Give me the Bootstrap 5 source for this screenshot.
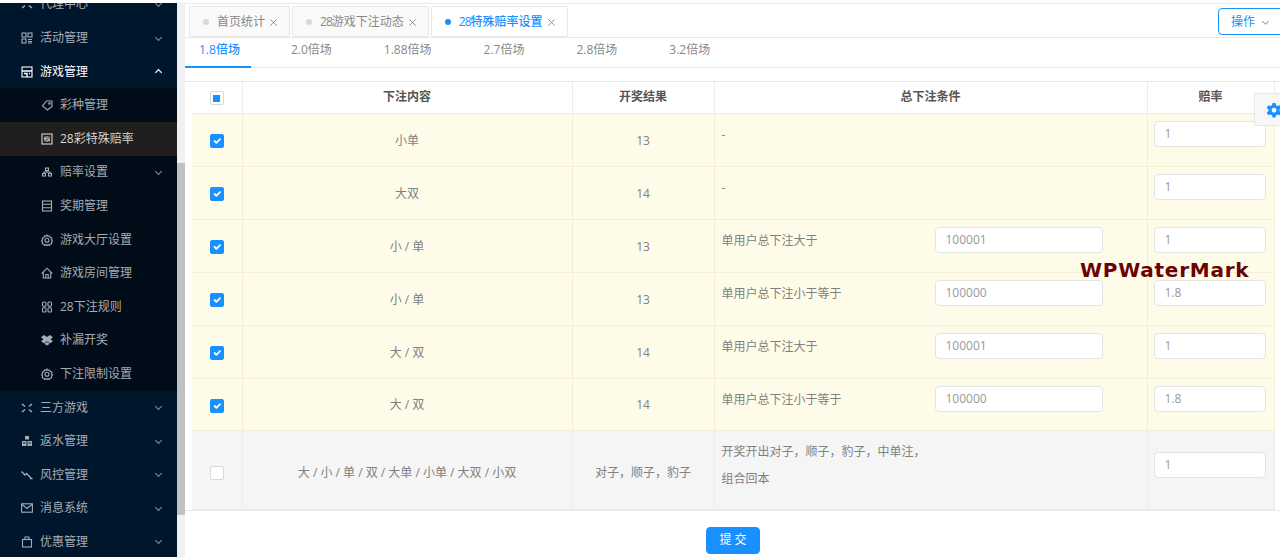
<!DOCTYPE html>
<html lang="zh-CN">
<head>
    <meta charset="UTF-8">
    <meta name="viewport" content="width=device-width, initial-scale=1.0">
    <title>28特殊赔率设置</title>
    <link href="https://cdn.jsdelivr.net/npm/bootstrap@5.3.0/dist/css/bootstrap.min.css" rel="stylesheet">
    <style>
        html, body {
            height: 557px;
            overflow: hidden;
        }
        body {
            font-family: "Open Sans", "Noto Sans CJK SC", sans-serif;
            font-size: 12px;
            color: #777;
            background: #fff;
        }
        .shell {
            height: 557px;
            position: relative;
        }
        /* sidebar */
        .side {
            width: 177px;
            margin-top: 3px;
            background: #00162c;
            overflow: hidden;
            flex: none;
        }
        .side-list {
            margin-top: -15.4px;
        }
        .side-item {
            height: 33.6px;
            padding-left: 21px;
            padding-right: 14px;
            color: #a5adb5;
            gap: 7px;
        }
        .side-sub {
            background: #000c17;
        }
        .side-sub .side-item {
            padding-left: 41px;
        }
        .side-item.is-open {
            color: #fff;
        }
        .side-item.is-current {
            background: #211f1d;
            color: #d5d5d5;
        }
        .ico {
            width: 12px;
            height: 12px;
            flex: none;
            fill: none;
            stroke: currentColor;
            stroke-width: 1.1;
        }
        .chev {
            width: 9px;
            height: 9px;
            margin-left: auto;
            fill: none;
            stroke: #7d8791;
            stroke-width: 1.3;
        }
        .is-open .chev {
            stroke: #fff;
        }
        .scroll-track {
            width: 8px;
            flex: none;
            margin-top: 3px;
            background: #f1f1f1;
        }
        .scroll-thumb {
            height: 352px;
            margin-top: 160px;
            background: #c1c1c1;
        }
        /* main */
        .main {
            min-width: 0;
            overflow: hidden;
        }
        .head-bar {
            height: 35px;
            margin-top: 3px;
            border-top: 1px solid #e8e8e8;
            border-bottom: 1px solid #e8e8e8;
            padding-left: 4px;
            gap: 2px;
        }
        .page-tab {
            height: 31px;
            padding: 2px 11px 0 13px;
            margin-top: 1px;
            background: #fafafa;
            border: 1px solid #e8e8e8;
            border-radius: 2px;
            color: #888;
            white-space: nowrap;
        }
        .page-tab.is-active {
            background: #fff;
            color: #1890ff;
            font-weight: 500;
        }
        .tab-dot {
            width: 6px;
            height: 6px;
            border-radius: 50%;
            background: #d9d9d9;
            margin-right: 8px;
        }
        .is-active .tab-dot {
            background: #1890ff;
        }
        .tab-x {
            width: 9px;
            height: 9px;
            margin-left: 4px;
            stroke: #888;
            stroke-width: 1;
            fill: none;
        }
        .num-tight {
            letter-spacing: -1px;
        }
        .action-btn {
            height: 27px;
            width: 72px;
            margin-right: -10px;
            margin-top: 1px;
            border: 1px solid #1890ff;
            border-radius: 4px;
            color: #1890ff;
            font-size: 12px;
            padding: 2px 0 0 12px;
            background: #fff;
            gap: 6px;
        }
        .action-btn:hover {
            color: #1890ff;
            background: #fff;
            border-color: #1890ff;
        }
        .action-btn svg {
            width: 9px;
            height: 9px;
            fill: none;
            stroke: #1890ff;
            stroke-width: 1.1;
        }
        .rate-tabs {
            height: 30px;
            border-bottom: 1px solid #e8e8e8;
            flex-wrap: nowrap;
        }
        .rate-tab {
            height: 30px;
            padding: 0 12px 4px 14px;
            margin-right: 26px;
            color: #888;
            border-bottom: 2px solid transparent;
            white-space: nowrap;
        }
        .rate-tab.is-active {
            color: #1890ff;
            border-bottom-color: #1890ff;
            font-weight: 500;
            padding-right: 11px;
        }
        .table-wrap {
            margin-top: 13px;
            padding: 0 6px 0 7px;
            border-top: 1px solid #e8e8e8;
            border-bottom: 1px solid #e8e8e8;
        }
        .rate-table {
            table-layout: fixed;
            width: 1082px;
            margin: 0;
            font-size: 12px;
            --bs-table-color: #808080;
            border-color: #ececec;
        }
        .rate-table.table > thead > tr > th {
            height: 31px;
            padding: 0;
            color: #555;
            font-weight: 600;
            text-align: center;
            vertical-align: middle;
            border-width: 0 1px 1px 0;
        }
        .rate-table.table > tbody > tr > td {
            height: 53px;
            padding: 8px 7px 6px;
            vertical-align: middle;
            text-align: center;
            border-width: 0 1px 1px 0;
        }
        .rate-table.table > tbody > tr.row-short > td {
            height: 52px;
        }
        .rate-table.table > tbody > tr > td.cell-top {
            padding-top: 7px;
            vertical-align: top;
            text-align: left;
        }
        .rate-table.table > tbody > tr > td.cell-rate {
            padding-left: 6px;
        }
        .row-warn {
            --bs-table-bg: #fefce8;
            border-color: #f3f0d6;
        }
        .row-plain {
            --bs-table-bg: #f5f5f5;
        }
        .rate-table.table > tbody > tr.row-plain > td {
            height: 79px;
            padding-top: 10px;
            padding-bottom: 4px;
        }
        .rate-table.table > tbody > tr.row-plain > td.cond-tall {
            padding-top: 7px;
        }
        .rate-table.table > tbody > tr.row-plain > td.cell-rate {
            padding-top: 21px;
            vertical-align: top;
        }
        .cond-line {
            height: 26px;
            line-height: 28px;
        }
        .cond-label {
            width: 213px;
            flex: none;
        }
        .cond-tall {
            line-height: 27px;
        }
        .num-input {
            height: 26px;
            padding: 0 10px;
            font-size: 12px;
            color: #999;
            border-color: #e4e4e4;
            border-radius: 4px;
        }
        .num-input.is-wide {
            width: 168px;
        }
        .num-input.is-rate {
            width: 112px;
        }
        .rate-table .form-check-input {
            width: 14px;
            height: 14px;
            margin: 0;
            border-radius: 2px;
            border-color: #d9d9d9;
            vertical-align: middle;
        }
        .rate-table .form-check-input:checked {
            background-color: #1890ff;
            border-color: #1890ff;
        }
        .half-check {
            display: inline-flex;
            align-items: center;
            justify-content: center;
            width: 14px;
            height: 14px;
            border: 1px solid #d9d9d9;
            border-radius: 2px;
            background: #fff;
            vertical-align: middle;
        }
        .half-check::after {
            content: "";
            width: 7px;
            height: 7px;
            background: #1890ff;
        }
        .submit-btn {
            width: 54px;
            height: 27px;
            padding: 0;
            font-size: 12px;
            background: #1890ff;
            border-color: #1890ff;
            border-radius: 4px;
        }
        .submit-row {
            margin-top: 16px;
            padding-left: 7px;
            padding-right: 6px;
        }
        /* overlays */
        .gear-tab {
            position: absolute;
            top: 93px;
            right: 0;
            width: 26px;
            height: 33px;
            background: #f7f7f7;
            border: 1px solid #e8e8e8;
            border-right: 0;
            overflow: hidden;
            padding: 9px 0 0 11px;
        }
        .gear-tab svg {
            width: 16px;
            height: 16px;
            fill: #1890ff;
            display: block;
        }
        .water-mark {
            position: absolute;
            left: 1080px;
            top: 256px;
            font-family: "DejaVu Sans", sans-serif;
            font-weight: 700;
            font-size: 20px;
            line-height: 28px;
            letter-spacing: 0.75px;
            color: #6b0202;
            white-space: nowrap;
        }
    </style>
</head>
<body>
    <svg width="0" height="0" class="position-absolute">
        <symbol id="i-grid" viewBox="0 0 12 12"><rect x="1" y="1" width="4" height="4"/><rect x="7" y="1" width="4" height="4"/><rect x="1" y="7" width="4" height="4"/><path d="M7 7.5h4M7 9.5h4M7 11h4"/></symbol>
        <symbol id="i-game" viewBox="0 0 12 12"><rect x="1" y="1" width="10" height="10"/><path d="M1 5h10M3 7.5h3v3.5M8 7.5h1" stroke-width="1.4"/></symbol>
        <symbol id="i-tag" viewBox="0 0 12 12"><path d="M5.5 2H11v5.5L6.5 11 1.5 7z"/><circle cx="8.5" cy="4.5" r=".7"/></symbol>
        <symbol id="i-chart" viewBox="0 0 12 12"><rect x="1" y="1" width="10" height="10"/><path d="M4 3.5v5M8 3.5v5M3 5.5h2M7 7h2M6 3v6"/></symbol>
        <symbol id="i-tree" viewBox="0 0 12 12"><rect x="4.5" y="2" width="3" height="2.5"/><rect x="1.5" y="7.5" width="3" height="2.5"/><rect x="7.5" y="7.5" width="3" height="2.5"/><path d="M6 4.5V6H3v1.5M6 6h3v1.5"/></symbol>
        <symbol id="i-list" viewBox="0 0 12 12"><rect x="1.5" y="1" width="9" height="10"/><path d="M1.5 4.3h9M1.5 7.7h9"/></symbol>
        <symbol id="i-gear" viewBox="0 0 12 12"><path d="M6 1l1 1.3 1.7-.3.6 1.6 1.6.6-.3 1.7L11.500 7l-1.100 1.100.3 1.600-1.600.6-.600 1.200L7 10.700 6 11.500 5 10.700 3.500 11.500l-.6-1.200-1.600-.6.300-1.600L.5 7l1.100-1.100-.300-1.700 1.600-.6.600-1.600L5 2.300z"/><circle cx="6" cy="6.300" r="2"/></symbol>
        <symbol id="i-home" viewBox="0 0 12 12"><path d="M.8 6.500 6 1.200l5.200 5.300M2.300 5.500V11h7.400V5.500M4.800 11V7.500h2.400V11"/></symbol>
        <symbol id="i-apps" viewBox="0 0 12 12"><rect x="1.500" y="1" width="3.500" height="4.300" rx="1"/><rect x="7" y="1" width="3.500" height="4.300" rx="1"/><rect x="1.500" y="6.700" width="3.500" height="4.300" rx="1"/><rect x="7" y="6.700" width="3.500" height="4.300" rx="1"/></symbol>
        <symbol id="i-box" viewBox="0 0 12 12"><path fill="currentColor" stroke="none" d="M3 1 6 3 9 1l3 2.200-2.500 2L12 7.300 9 9.200 6 7.300 3 9.200 0 7.300l2.500-2.100L0 3.200zM3.200 9.800 6 8l2.800 1.800L6 11.600z"/></symbol>
        <symbol id="i-expand" viewBox="0 0 12 12"><path d="M1 2l3 2.500M11 2 8 4.500M1 10l3-2.500M11 10 8 7.500" stroke-width="1.500"/></symbol>
        <symbol id="i-bank" viewBox="0 0 12 12"><path fill="currentColor" stroke="none" d="M4 1h4v3.500H4zM1 6h4.500v5H1zM6.500 6H11v5H6.500z"/><path d="M2 8h2.500M7.500 8H10" stroke="#00162c"/></symbol>
        <symbol id="i-fall" viewBox="0 0 12 12"><path d="M.5 2.500 4 6l1.500-1.500L10 9M11.500 9.500H9" stroke-width="1.300"/></symbol>
        <symbol id="i-mail" viewBox="0 0 12 12"><rect x=".6" y="1.800" width="10.800" height="8.400"/><path d="M.8 2.300 6 6.500l5.200-4.200"/></symbol>
        <symbol id="i-bag" viewBox="0 0 12 12"><rect x="1.500" y="3.500" width="9" height="7.500"/><path d="M4 3.500V1h4v2.500"/></symbol>
        <symbol id="i-down" viewBox="0 0 10 10"><path d="M1.500 3.500 5 7l3.500-3.500"/></symbol>
        <symbol id="i-up" viewBox="0 0 10 10"><path d="M1.500 6.500 5 3l3.500 3.500"/></symbol>
        <symbol id="i-x" viewBox="0 0 10 10"><path d="M1.500 1.500l7 7M8.500 1.500l-7 7"/></symbol>
    </svg>

    <div class="shell d-flex">
        <aside class="side">
            <div class="side-list">
                <div class="side-item d-flex align-items-center"><svg class="ico"><use href="#i-expand"/></svg>代理中心<svg class="chev"><use href="#i-down"/></svg></div>
                <div class="side-item d-flex align-items-center"><svg class="ico"><use href="#i-grid"/></svg>活动管理<svg class="chev"><use href="#i-down"/></svg></div>
                <div class="side-item is-open d-flex align-items-center"><svg class="ico"><use href="#i-game"/></svg>游戏管理<svg class="chev"><use href="#i-up"/></svg></div>
                <div class="side-sub">
                    <div class="side-item d-flex align-items-center"><svg class="ico"><use href="#i-tag"/></svg>彩种管理</div>
                    <div class="side-item is-current d-flex align-items-center"><svg class="ico"><use href="#i-chart"/></svg>28彩特殊赔率</div>
                    <div class="side-item d-flex align-items-center"><svg class="ico"><use href="#i-tree"/></svg>赔率设置<svg class="chev"><use href="#i-down"/></svg></div>
                    <div class="side-item d-flex align-items-center"><svg class="ico"><use href="#i-list"/></svg>奖期管理</div>
                    <div class="side-item d-flex align-items-center"><svg class="ico"><use href="#i-gear"/></svg>游戏大厅设置</div>
                    <div class="side-item d-flex align-items-center"><svg class="ico"><use href="#i-home"/></svg>游戏房间管理</div>
                    <div class="side-item d-flex align-items-center"><svg class="ico"><use href="#i-apps"/></svg>28下注规则</div>
                    <div class="side-item d-flex align-items-center"><svg class="ico"><use href="#i-box"/></svg>补漏开奖</div>
                    <div class="side-item d-flex align-items-center"><svg class="ico"><use href="#i-gear"/></svg>下注限制设置</div>
                </div>
                <div class="side-item d-flex align-items-center"><svg class="ico"><use href="#i-expand"/></svg>三方游戏<svg class="chev"><use href="#i-down"/></svg></div>
                <div class="side-item d-flex align-items-center"><svg class="ico"><use href="#i-bank"/></svg>返水管理<svg class="chev"><use href="#i-down"/></svg></div>
                <div class="side-item d-flex align-items-center"><svg class="ico"><use href="#i-fall"/></svg>风控管理<svg class="chev"><use href="#i-down"/></svg></div>
                <div class="side-item d-flex align-items-center"><svg class="ico"><use href="#i-mail"/></svg>消息系统<svg class="chev"><use href="#i-down"/></svg></div>
                <div class="side-item d-flex align-items-center"><svg class="ico"><use href="#i-bag"/></svg>优惠管理<svg class="chev"><use href="#i-down"/></svg></div>
            </div>
        </aside>
        <div class="scroll-track"><div class="scroll-thumb"></div></div>

        <main class="main flex-grow-1">
            <div class="head-bar d-flex align-items-center">
                <div class="page-tab d-flex align-items-center"><span class="tab-dot"></span>首页统计<svg class="tab-x"><use href="#i-x"/></svg></div>
                <div class="page-tab d-flex align-items-center"><span class="tab-dot"></span><span class="num-tight">28</span>游戏下注动态<svg class="tab-x"><use href="#i-x"/></svg></div>
                <div class="page-tab is-active d-flex align-items-center"><span class="tab-dot"></span><span class="num-tight">28</span>特殊赔率设置<svg class="tab-x"><use href="#i-x"/></svg></div>
                <button type="button" class="btn action-btn ms-auto d-flex align-items-center">操作<svg><use href="#i-down"/></svg></button>
            </div>

            <div class="rate-tabs d-flex">
                <div class="rate-tab is-active d-flex align-items-center">1.8倍场</div>
                <div class="rate-tab d-flex align-items-center">2.0倍场</div>
                <div class="rate-tab d-flex align-items-center">1.88倍场</div>
                <div class="rate-tab d-flex align-items-center">2.7倍场</div>
                <div class="rate-tab d-flex align-items-center">2.8倍场</div>
                <div class="rate-tab d-flex align-items-center">3.2倍场</div>
            </div>

            <div class="table-wrap">
                <table class="table rate-table">
                    <colgroup>
                        <col style="width:50px"><col style="width:330px"><col style="width:142px"><col style="width:433px"><col style="width:127px">
                    </colgroup>
                    <thead>
                        <tr>
                            <th><span class="half-check"></span></th>
                            <th>下注内容</th>
                            <th>开奖结果</th>
                            <th>总下注条件</th>
                            <th>赔率</th>
                        </tr>
                    </thead>
                    <tbody>
                        <tr class="row-warn">
                            <td><input class="form-check-input" type="checkbox" checked></td>
                            <td>小单</td>
                            <td>13</td>
                            <td class="cell-top"><div class="cond-line">-</div></td>
                            <td class="cell-top cell-rate"><input class="form-control num-input is-rate" value="1"></td>
                        </tr>
                        <tr class="row-warn">
                            <td><input class="form-check-input" type="checkbox" checked></td>
                            <td>大双</td>
                            <td>14</td>
                            <td class="cell-top"><div class="cond-line">-</div></td>
                            <td class="cell-top cell-rate"><input class="form-control num-input is-rate" value="1"></td>
                        </tr>
                        <tr class="row-warn">
                            <td><input class="form-check-input" type="checkbox" checked></td>
                            <td>小 / 单</td>
                            <td>13</td>
                            <td class="cell-top"><div class="cond-line d-flex"><span class="cond-label">单用户总下注大于</span><input class="form-control num-input is-wide" value="100001"></div></td>
                            <td class="cell-top cell-rate"><input class="form-control num-input is-rate" value="1"></td>
                        </tr>
                        <tr class="row-warn">
                            <td><input class="form-check-input" type="checkbox" checked></td>
                            <td>小 / 单</td>
                            <td>13</td>
                            <td class="cell-top"><div class="cond-line d-flex"><span class="cond-label">单用户总下注小于等于</span><input class="form-control num-input is-wide" value="100000"></div></td>
                            <td class="cell-top cell-rate"><input class="form-control num-input is-rate" value="1.8"></td>
                        </tr>
                        <tr class="row-warn">
                            <td><input class="form-check-input" type="checkbox" checked></td>
                            <td>大 / 双</td>
                            <td>14</td>
                            <td class="cell-top"><div class="cond-line d-flex"><span class="cond-label">单用户总下注大于</span><input class="form-control num-input is-wide" value="100001"></div></td>
                            <td class="cell-top cell-rate"><input class="form-control num-input is-rate" value="1"></td>
                        </tr>
                        <tr class="row-warn row-short">
                            <td><input class="form-check-input" type="checkbox" checked></td>
                            <td>大 / 双</td>
                            <td>14</td>
                            <td class="cell-top"><div class="cond-line d-flex"><span class="cond-label">单用户总下注小于等于</span><input class="form-control num-input is-wide" value="100000"></div></td>
                            <td class="cell-top cell-rate"><input class="form-control num-input is-rate" value="1.8"></td>
                        </tr>
                        <tr class="row-plain">
                            <td><input class="form-check-input" type="checkbox"></td>
                            <td>大 / 小 / 单 / 双 / 大单 / 小单 / 大双 / 小双</td>
                            <td>对子，顺子，豹子</td>
                            <td class="cell-top cond-tall">开奖开出对子，顺子，豹子，中单注，<br>组合回本</td>
                            <td class="cell-top cell-rate"><input class="form-control num-input is-rate" value="1"></td>
                        </tr>
                    </tbody>
                </table>
            </div>

            <div class="submit-row d-flex justify-content-center">
                <button type="button" class="btn btn-primary submit-btn">提 交</button>
            </div>
        </main>

        <div class="gear-tab">
            <svg viewBox="0 0 16 16"><path fill-rule="evenodd" d="M6.500 0h3l.5 2.200 1.500.8L13.700 2.300l1.500 2.600-1.700 1.500v1.700l1.700 1.500-1.500 2.600-2.200-.7-1.500.8L9.500 14.500h-3L6 12.300l-1.500-.8-2.200.7L.8 9.600l1.700-1.500V6.400L.8 4.900l1.500-2.600 2.200.7L6 2.200zM8 4.800a2.450 2.450 0 1 0 0 4.900 2.450 2.450 0 0 0 0-4.900z"/></svg>
        </div>
        <div class="water-mark">WPWaterMark</div>
    </div>

    <script src="https://cdn.jsdelivr.net/npm/bootstrap@5.3.0/dist/js/bootstrap.bundle.min.js"></script>
</body>
</html>
